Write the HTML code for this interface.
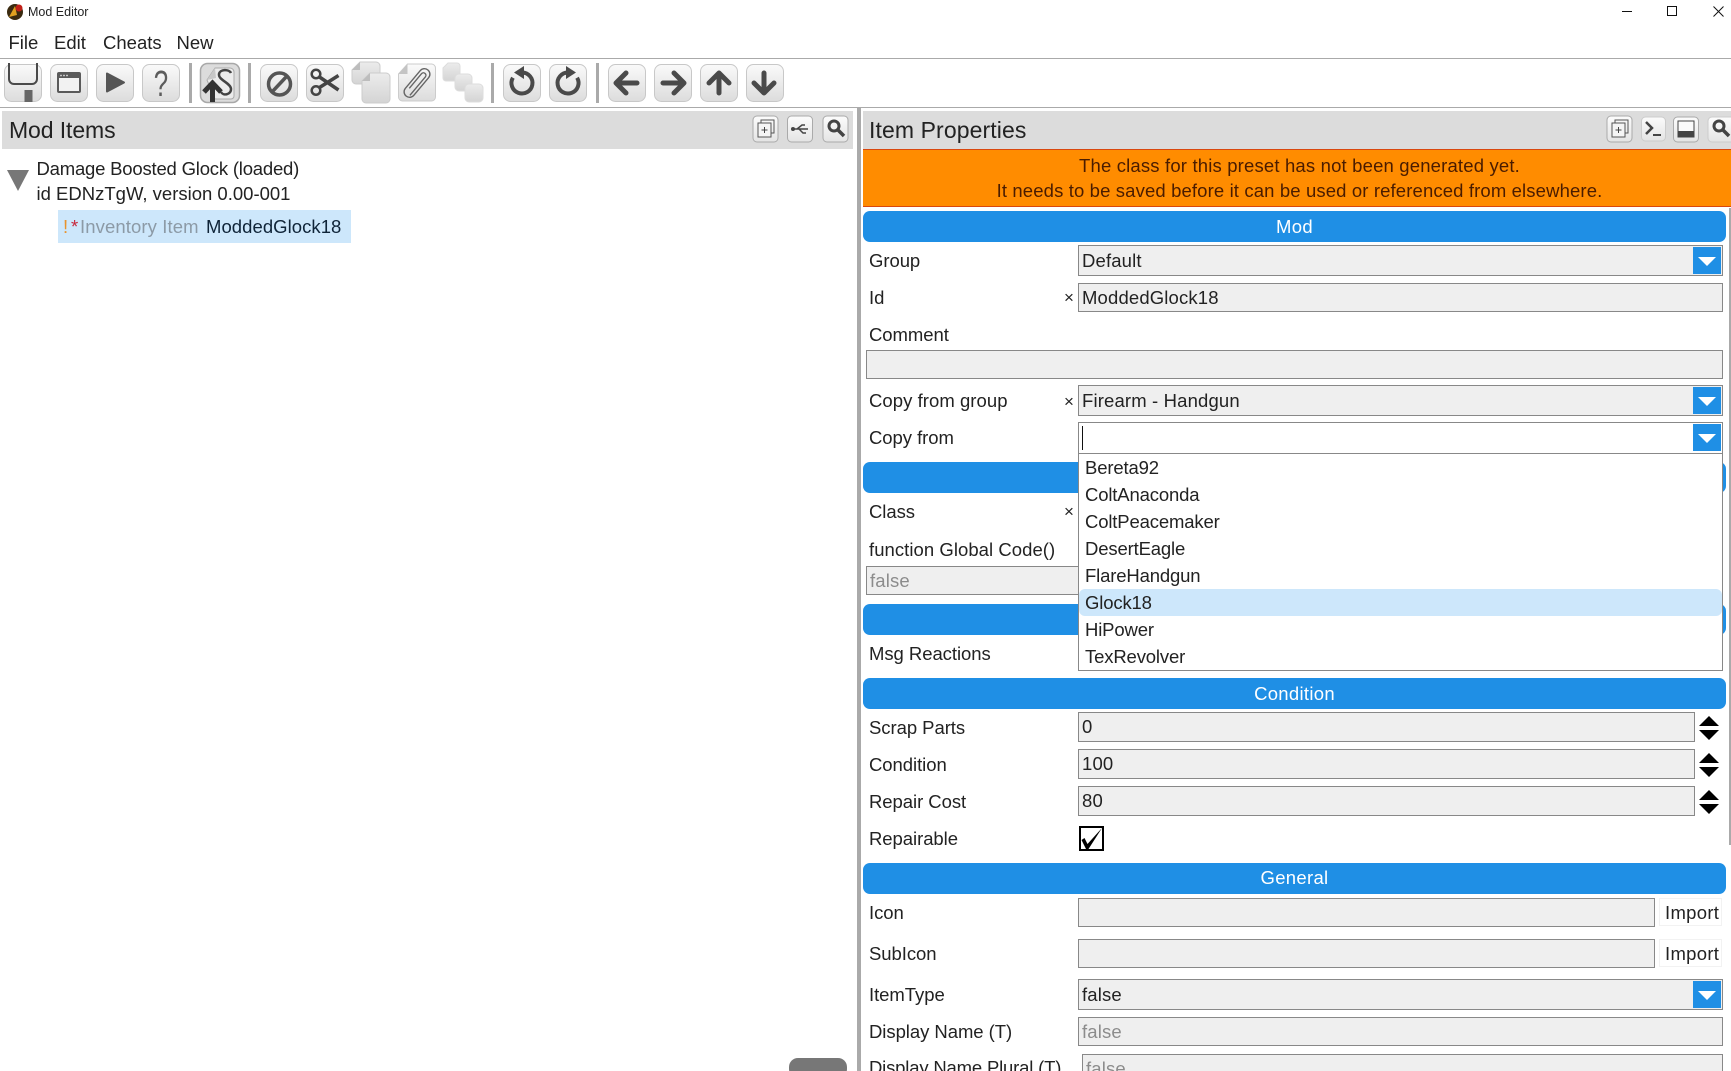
<!DOCTYPE html>
<html><head><meta charset="utf-8"><style>
html,body{margin:0;padding:0;background:#fff;width:1731px;height:1071px;overflow:hidden}
#w{position:relative;width:1731px;height:1071px;overflow:hidden;font-family:"Liberation Sans",sans-serif;color:#222;font-size:18.5px;background:#fff}
.a{position:absolute}
.t{position:absolute;height:26px;line-height:26px;white-space:nowrap;letter-spacing:-.05px;margin-top:1px}
.bar{position:absolute;left:863px;width:863px;height:31px;background:#1f8fe5;border-radius:7px;color:#fff;text-align:center;line-height:31px;letter-spacing:.3px}
.box{position:absolute;box-sizing:border-box;background:#efefef;border:1px solid #888}
.box span{position:absolute;left:3px;top:50%;margin-top:-13px;height:26px;line-height:26px;letter-spacing:.15px}
.g{color:#8c8c8c}
.dd{position:absolute;left:1693px;width:28px;height:27px;background:#1f8fe5}
.dd:after{content:"";position:absolute;left:5px;top:10px;border-left:9px solid transparent;border-right:9px solid transparent;border-top:9px solid #fff}
.up,.dn{position:absolute;left:1699px;width:0;height:0;border-left:10.5px solid transparent;border-right:10.5px solid transparent}
.up{border-bottom:10px solid #000}.dn{border-top:10px solid #000}
.x{position:absolute;left:1064px;font-size:17px;height:26px;line-height:26px}
.i{position:absolute;left:1085px;height:27px;line-height:27px;letter-spacing:-.15px;color:#222}
</style></head><body><div id="w">
<!-- title bar -->
<svg class="a" style="left:6px;top:3px" width="18" height="18" viewBox="0 0 18 18"><circle cx="9" cy="9" r="8" fill="#3a2a10"/><path d="M3 14L9 3l2 9z" fill="#e0a020"/><circle cx="13" cy="5" r="3.5" fill="#c02018"/></svg>
<div class="t" style="left:28px;top:-2px;font-size:12.5px;letter-spacing:0">Mod Editor</div>
<svg class="a" style="left:1610px;top:0" width="121" height="24"><path d="M12 11.5h10" stroke="#111" fill="none"/><rect x="57.5" y="6.5" width="9" height="9" stroke="#111" fill="none"/><path d="M103.5 6.5l10 10M113.500 6.500l-10 10" stroke="#111" fill="none"/></svg>
<div class="t" style="left:8.500px;top:29px;letter-spacing:0">File</div>
<div class="t" style="left:54px;top:29px;letter-spacing:0">Edit</div>
<div class="t" style="left:103px;top:29px;letter-spacing:0">Cheats</div>
<div class="t" style="left:176.500px;top:29px;letter-spacing:0">New</div>
<div class="a" style="left:0;top:58px;width:1731px;height:1px;background:#aaa"></div>
<!-- toolbar -->
<svg class="a" style="left:0;top:59px" width="800" height="48" viewBox="0 59 800 48">
<defs><linearGradient id="b" x1="0" y1="0" x2="0" y2="1"><stop offset="0" stop-color="#fafafa"/><stop offset="1" stop-color="#dcdcdc"/></linearGradient>
<linearGradient id="d" x1="0" y1="0" x2="0" y2="1"><stop offset="0" stop-color="#ececec"/><stop offset="1" stop-color="#d4d4d4"/></linearGradient></defs>
<g fill="url(#b)" stroke="#c8c8c8">
<rect x="4.500" y="64.500" width="37" height="37" rx="7"/><rect x="50.500" y="64.500" width="37" height="37" rx="7"/><rect x="96.500" y="64.500" width="37" height="37" rx="7"/><rect x="142.500" y="64.500" width="37" height="37" rx="7"/>
<rect x="260.500" y="64.500" width="37" height="37" rx="7"/><rect x="306.500" y="64.500" width="37" height="37" rx="7"/>
<rect x="503.500" y="64.500" width="37" height="37" rx="7"/><rect x="549.500" y="64.500" width="37" height="37" rx="7"/><rect x="608.500" y="64.500" width="37" height="37" rx="7"/><rect x="654.500" y="64.500" width="37" height="37" rx="7"/><rect x="700.500" y="64.500" width="37" height="37" rx="7"/><rect x="746.500" y="64.500" width="37" height="37" rx="7"/>
</g>
<rect x="200.500" y="63.500" width="39" height="39" rx="7" fill="#dcdcdc" stroke="#a8a8a8" stroke-width="1.500"/>
<g fill="#aaa"><rect x="189" y="63" width="3" height="40"/><rect x="248" y="63" width="3" height="40"/><rect x="491" y="63" width="3" height="40"/><rect x="596" y="63" width="3" height="40"/></g>
<!-- save -->
<path d="M9 63v16a5 5 0 0 0 5 5h18a5 5 0 0 0 5-5V63" fill="none" stroke="#4a4a4a" stroke-width="2"/><rect x="24.500" y="90" width="8" height="12" fill="#666"/>
<!-- window -->
<rect x="58" y="73" width="22" height="19" rx="1" fill="#f2f2f2" stroke="#5a5a5a" stroke-width="2"/><rect x="58" y="73" width="22" height="5" fill="#5a5a5a"/><circle cx="61" cy="75.500" r=".9" fill="#ddd"/><circle cx="64" cy="75.500" r=".9" fill="#ddd"/><circle cx="67" cy="75.500" r=".9" fill="#ddd"/>
<!-- play -->
<path d="M107 73.500v18l17-9z" fill="#555" stroke="#555" stroke-width="2" stroke-linejoin="round"/>
<!-- ? -->
<text transform="translate(161 96) scale(.72 1)" text-anchor="middle" font-size="36" fill="#5c5c5c" font-family="Liberation Sans">?</text>
<!-- S up -->
<path d="M207 80l8-12h15a4 4 0 0 1 4 4v24a3 3 0 0 1-3 3h-16z" fill="#ececec" stroke="#aaa"/><path d="M207 80l9-2-1-10z" fill="#c8c8c8"/>
<path d="M231 73c-2-4-11-4-12 1-1 6 12 9 12 15 0 6-8 7-10 3" fill="none" stroke="#444" stroke-width="2.500"/>
<path d="M212.500 102V86M204 92l8.500-9 8.500 9" fill="none" stroke="#333" stroke-width="5"/>
<!-- ban -->
<circle cx="279.500" cy="84" r="11" fill="none" stroke="#555" stroke-width="3.500"/><path d="M272 92l15-16" stroke="#555" stroke-width="3.500"/>
<!-- scissors -->
<circle cx="316" cy="74" r="4.300" fill="none" stroke="#444" stroke-width="2.500"/><circle cx="316" cy="90.500" r="4.300" fill="none" stroke="#444" stroke-width="2.500"/><path d="M319.500 77l19 13M319.500 87.500l19-12" stroke="#444" stroke-width="3.500"/>
<!-- copy -->
<path d="M360 62h16a4 4 0 0 1 4 4v18h-24a4 4 0 0 1-4-4V70z" fill="url(#d)" stroke="#ccc"/><path d="M352 70h8v-8z" fill="#bdbdbd"/>
<path d="M370 73h16a4 4 0 0 1 4 4v22a4 4 0 0 1-4 4h-20a4 4 0 0 1-4-4V81z" fill="url(#d)" stroke="#ccc"/><path d="M362 81h8v-8z" fill="#bdbdbd"/>
<!-- paste -->
<path d="M398.500 74l9-10h24a4 4 0 0 1 4 4v29a4 4 0 0 1-4 4h-29a4 4 0 0 1-4-4z" fill="url(#b)" stroke="#ccc"/><path d="M398.500 74h9V64z" fill="#c4c4c4"/>
<g transform="rotate(40 417 83)" fill="none" stroke="#666" stroke-width="1.400"><rect x="411.500" y="66" width="11" height="34" rx="5.500"/><path d="M414.500 92V73a2.500 2.500 0 0 1 5 0v24"/></g>
<!-- multi -->
<path d="M448 63h9a3 3 0 0 1 3 3v12a3 3 0 0 1-3 3h-11a3 3 0 0 1-3-3V68z" fill="url(#d)" stroke="#ddd"/><rect x="455" y="74" width="17" height="17" rx="4" fill="url(#d)" stroke="#ddd"/><rect x="465" y="84" width="18" height="18" rx="4" fill="url(#d)" stroke="#ddd"/>
<!-- undo/redo -->
<path d="M522 72.500A10.500 10.500 0 1 1 512.900 77.700" fill="none" stroke="#4a4a4a" stroke-width="4"/><path d="M524 66v13l-10-6.500z" fill="#4a4a4a"/>
<path d="M568 72.500A10.500 10.500 0 1 0 577.100 77.700" fill="none" stroke="#4a4a4a" stroke-width="4"/><path d="M566 66v13l10-6.500z" fill="#4a4a4a"/>
<!-- arrows -->
<g fill="none" stroke="#4a4a4a" stroke-width="5" stroke-linecap="round" stroke-linejoin="round">
<path d="M617 83h20M626 73l-10 10 10 10"/><path d="M663 83h20M674 73l10 10-10 10"/>
<path d="M719 93V73M709 83l10-10 10 10"/><path d="M764 73v20M754 83l10 10 10-10"/></g>
</svg>
<div class="a" style="left:0;top:107px;width:1731px;height:1px;background:#aaa"></div>
<!-- left panel -->
<div class="a" style="left:2px;top:111px;width:851px;height:38px;background:#dcdcdc"></div>
<div class="t" style="left:9px;top:116px;font-size:23px;letter-spacing:-.1px">Mod Items</div>
<div class="a" style="left:857px;top:107px;width:3.500px;height:964px;background:#aaa"></div>
<svg class="a" style="left:750px;top:113px" width="100" height="32"><defs><linearGradient id="h" x1="0" y1="0" x2="0" y2="1"><stop offset="0" stop-color="#fcfcfc"/><stop offset="1" stop-color="#e4e4e4"/></linearGradient></defs>
<rect x="3" y="3" width="25" height="26" rx="4" fill="url(#h)" stroke="#aaa"/><rect x="11" y="7" width="13" height="13" fill="none" stroke="#555"/><rect x="8" y="10" width="13" height="14" fill="#f5f5f5" stroke="#555"/><path d="M11.500 17h6M14.500 14v6" stroke="#444"/>
<rect x="37.500" y="3" width="25" height="26" rx="4" fill="url(#h)" stroke="#aaa"/><path d="M42 16h16M47 16l5-4h3M49 16l4 4h3" fill="none" stroke="#444" stroke-width="1.500"/><circle cx="43" cy="16" r="2" fill="#444"/>
<rect x="73" y="3" width="25" height="26" rx="4" fill="url(#h)" stroke="#aaa"/><circle cx="84" cy="13" r="5" fill="none" stroke="#444" stroke-width="3"/><path d="M88 17l6 6" stroke="#444" stroke-width="3.500"/></svg>
<svg class="a" style="left:7px;top:170px" width="23" height="22"><path d="M0 0h22L11 21z" fill="#777"/></svg>
<div class="t" style="left:36.500px;top:155px;letter-spacing:-.2px">Damage Boosted Glock (loaded)</div>
<div class="t" style="left:36.500px;top:180px;letter-spacing:0">id EDNzTgW, version 0.00-001</div>
<div class="a" style="left:58px;top:210px;width:293px;height:33px;background:#cde7fb"></div>
<div class="t" style="left:63px;top:213px"><span style="color:#e8932c">!</span></div>
<div class="t" style="left:71px;top:213px"><span style="color:#c8283c">*</span></div>
<div class="t" style="left:80px;top:213px;color:#8c9aa6;letter-spacing:.1px">Inventory Item</div>
<div class="t" style="left:206px;top:213px;color:#0f2438;letter-spacing:.05px">ModdedGlock18</div>
<div class="a" style="left:789px;top:1058px;width:58px;height:20px;background:#777;border-radius:9px"></div>
<!-- right panel -->
<div class="a" style="left:863px;top:111px;width:868px;height:38px;background:#dcdcdc"></div>
<div class="t" style="left:869px;top:116px;font-size:23px;letter-spacing:.1px">Item Properties</div>
<svg class="a" style="left:1605px;top:113px" width="126" height="32"><rect x="2" y="3" width="25" height="26" rx="4" fill="url(#h)" stroke="#aaa"/><rect x="10" y="7" width="13" height="13" fill="none" stroke="#555"/><rect x="7" y="10" width="13" height="14" fill="#f5f5f5" stroke="#555"/><path d="M10.500 17h6M13.500 14v6" stroke="#444"/>
<rect x="36.500" y="4" width="24" height="24" rx="4" fill="url(#h)" stroke="#ccc"/><path d="M41 9l6 6-6 6" fill="none" stroke="#444" stroke-width="2.500"/><path d="M48 22h8" stroke="#444" stroke-width="2"/>
<rect x="68.500" y="4" width="25" height="25" rx="4" fill="url(#h)" stroke="#aaa"/><rect x="73" y="8" width="16" height="16" fill="#fafafa" stroke="#444"/><rect x="73" y="18" width="16" height="6" fill="#444"/>
<rect x="103" y="4" width="30" height="25" rx="4" fill="url(#h)" stroke="#ccc"/><circle cx="114" cy="13" r="5" fill="none" stroke="#444" stroke-width="3"/><path d="M118 17l6 6" stroke="#444" stroke-width="3.500"/></svg>
<div class="a" style="left:863px;top:149px;width:868px;height:56px;background:#ff8c00;border-top:1px solid #d9480f;border-bottom:1px solid #d9480f"></div>
<div class="t" style="left:868px;width:863px;top:152px;text-align:center;color:#4a1c00;letter-spacing:.17px">The class for this preset has not been generated yet.</div>
<div class="t" style="left:868px;width:863px;top:177px;text-align:center;color:#4a1c00;letter-spacing:.13px">It needs to be saved before it can be used or referenced from elsewhere.</div>
<div class="a" style="left:1729px;top:208px;width:2px;height:637px;background:#aaa"></div>

<div class="bar" style="top:211px">Mod</div>
<div class="t" style="left:869px;top:247px">Group</div>
<div class="box" style="left:1078px;top:245px;width:645px;height:31px"><span>Default</span></div><div class="dd" style="top:247px"></div>
<div class="t" style="left:869px;top:284px">Id</div><div class="x" style="top:285px">×</div>
<div class="box" style="left:1078px;top:283px;width:645px;height:29px"><span>ModdedGlock18</span></div>
<div class="t" style="left:869px;top:321px">Comment</div>
<div class="box" style="left:866px;top:350px;width:857px;height:29px"></div>
<div class="t" style="left:869px;top:387px;letter-spacing:.05px">Copy from group</div><div class="x" style="top:389px">×</div>
<div class="box" style="left:1078px;top:385px;width:645px;height:31px"><span>Firearm - Handgun</span></div><div class="dd" style="top:387px"></div>
<div class="t" style="left:869px;top:424px">Copy from</div>

<div class="bar" style="top:462px"></div>
<div class="t" style="left:869px;top:498px">Class</div><div class="x" style="top:499px">×</div>
<div class="t" style="left:869px;top:536px;letter-spacing:.05px">function Global Code()</div>
<div class="box" style="left:866px;top:566px;width:300px;height:29px"><span class="g">false</span></div>
<div class="bar" style="top:604px"></div>
<div class="t" style="left:869px;top:640px">Msg Reactions</div>

<!-- dropdown -->
<div class="box" style="left:1078px;top:422px;width:645px;height:32px;background:#fff"></div><div class="a" style="left:1082px;top:426px;width:1px;height:24px;background:#111"></div><div class="dd" style="top:424px"></div>
<div class="a" style="left:1078px;top:454px;width:645px;height:217px;box-sizing:border-box;background:#fff;border:1px solid #888;border-top:0"></div>
<div class="a" style="left:1079px;top:589px;width:643px;height:27px;background:#cde7fb;border-radius:6px"></div>
<div class="i" style="top:454px">Bereta92</div>
<div class="i" style="top:481px">ColtAnaconda</div>
<div class="i" style="top:508px">ColtPeacemaker</div>
<div class="i" style="top:535px">DesertEagle</div>
<div class="i" style="top:562px">FlareHandgun</div>
<div class="i" style="top:589px">Glock18</div>
<div class="i" style="top:616px">HiPower</div>
<div class="i" style="top:643px">TexRevolver</div>

<div class="bar" style="top:678px">Condition</div>
<div class="t" style="left:869px;top:714px">Scrap Parts</div>
<div class="box" style="left:1078px;top:712px;width:617px;height:30px"><span>0</span></div>
<div class="up" style="top:716px"></div><div class="dn" style="top:730px"></div>
<div class="t" style="left:869px;top:751px">Condition</div>
<div class="box" style="left:1078px;top:749px;width:617px;height:30px"><span>100</span></div>
<div class="up" style="top:753px"></div><div class="dn" style="top:767px"></div>
<div class="t" style="left:869px;top:788px">Repair Cost</div>
<div class="box" style="left:1078px;top:786px;width:617px;height:30px"><span>80</span></div>
<div class="up" style="top:790px"></div><div class="dn" style="top:804px"></div>
<div class="t" style="left:869px;top:825px">Repairable</div>
<svg class="a" style="left:1079px;top:826px" width="25" height="25"><rect x="1" y="1" width="23" height="23" fill="#fff" stroke="#000" stroke-width="2"/><path d="M2.500 14L5.500 12 8.500 18 23 2 9.500 23 7 23z" fill="#000"/></svg>

<div class="bar" style="top:863px;line-height:30px">General</div>
<div class="t" style="left:869px;top:899px">Icon</div>
<div class="box" style="left:1078px;top:898px;width:577px;height:29px"></div>
<div class="a" style="left:1659px;top:898px;width:63px;height:28px;border:1px solid #f2f2f2;box-sizing:border-box"></div>
<div class="t" style="left:1665px;top:899px;letter-spacing:.3px">Import</div>
<div class="t" style="left:869px;top:940px">SubIcon</div>
<div class="box" style="left:1078px;top:939px;width:577px;height:29px"></div>
<div class="a" style="left:1659px;top:939px;width:63px;height:28px;border:1px solid #f2f2f2;box-sizing:border-box"></div>
<div class="t" style="left:1665px;top:940px;letter-spacing:.3px">Import</div>
<div class="t" style="left:869px;top:981px">ItemType</div>
<div class="box" style="left:1078px;top:979px;width:645px;height:31px"><span>false</span></div><div class="dd" style="top:981px"></div>
<div class="t" style="left:869px;top:1018px">Display Name (T)</div>
<div class="box" style="left:1078px;top:1017px;width:645px;height:29px"><span class="g">false</span></div>
<div class="t" style="left:869px;top:1054px;letter-spacing:-.18px">Display Name Plural (T)</div>
<div class="box" style="left:1082px;top:1054px;width:641px;height:29px"><span class="g">false</span></div>
</div></body></html>
